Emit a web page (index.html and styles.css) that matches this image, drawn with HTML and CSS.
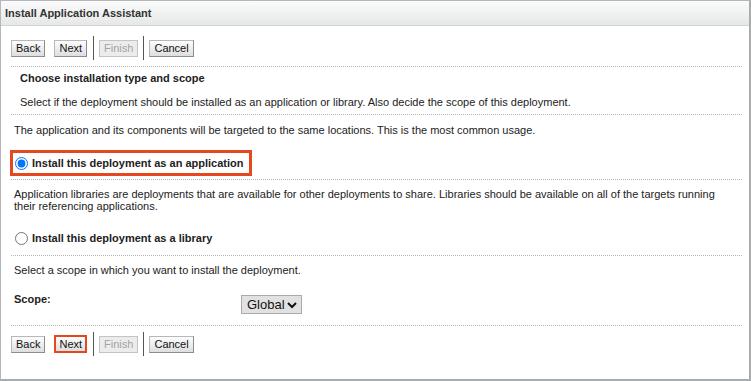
FILE: index.html
```html
<!DOCTYPE html>
<html>
<head>
  <title>Install Application Assistant</title>
  <link rel="stylesheet" href="styles.css">
</head>
<body>
  <div class="panel">
    <div class="panel-title">Install Application Assistant</div>
    <div class="panel-body">

      <div class="toolbar">
        <button class="button">Back</button>
        <button class="button next">Next</button>
        <span class="separator"></span>
        <button class="button" disabled>Finish</button>
        <span class="separator"></span>
        <button class="button cancel">Cancel</button>
      </div>

      <div class="rule"></div>

      <div class="step-head">
        <h2>Choose installation type and scope</h2>
        <p>Select if the deployment should be installed as an application or library. Also decide the scope of this deployment.</p>
      </div>

      <div class="rule"></div>

      <p class="info first-info">The application and its components will be targeted to the same locations. This is the most common usage.</p>

      <label class="choice highlight">
        <input type="radio" name="type" checked>
        <span>Install this deployment as an application</span>
      </label>

      <div class="rule rule-tight"></div>

      <p class="info multi">Application libraries are deployments that are available for other deployments to share. Libraries should be available on all of the targets running their referencing applications.</p>

      <label class="choice library">
        <input type="radio" name="type">
        <span>Install this deployment as a library</span>
      </label>

      <div class="rule rule-loose"></div>

      <p class="info scope-info">Select a scope in which you want to install the deployment.</p>

      <div class="scope-row">
        <span class="scope-label">Scope:</span>
        <select class="scope-select">
          <option>Global</option>
        </select>
      </div>

      <div class="rule"></div>

      <div class="toolbar bottom">
        <button class="button">Back</button>
        <button class="button next marked">Next</button>
        <span class="separator"></span>
        <button class="button" disabled>Finish</button>
        <span class="separator"></span>
        <button class="button cancel">Cancel</button>
      </div>

    </div>
  </div>
</body>
</html>
```

FILE: styles.css
```css
body {
  margin: 0;
  padding: 0;
  background-color: #fff;
  color: #222;
  font-family: "Liberation Sans", Arial, sans-serif;
  font-size: 11px;
}

/* Outer panel */
.panel {
  box-sizing: border-box;
  width: 751px;
  height: 381px;
  border: 1px solid #b4b8bb;
  border-right: 2px solid #a8acaf;
  border-bottom: 2px solid #a8acaf;
}

.panel-title {
  height: 24px;
  line-height: 24px;
  padding-left: 4px;
  font-weight: bold;
  color: #333;
  background: linear-gradient(#fbfbfb, #e6e8e8);
  border-bottom: 1px solid #d2d4d4;
}

.panel-body {
  padding: 0 8px 0 9px;
}

/* Button rows */
.toolbar {
  display: flex;
  align-items: center;
  height: 24px;
  margin: 10px 0 6px;
  padding-left: 1px;
}

.toolbar.bottom {
  margin-top: 6px;
}

.button {
  height: 17px;
  padding: 0 4px;
  margin-right: 9px;
  font-family: "Liberation Sans", Arial, sans-serif;
  font-size: 11px;
  line-height: 15px;
  color: #111;
  border: 1px solid #8c8c8c;
  border-top-color: #b8b8b8;
  border-left-color: #b8b8b8;
  border-radius: 0;
  background: linear-gradient(#fdfdfd, #dedede);
  cursor: pointer;
}

.button.next {
  margin-right: 6px;
}

.button.cancel {
  padding: 0 4px;
}

.button:disabled {
  color: #a3a3a3;
  border-color: #c4c4c4;
  background: #ececec;
  margin-right: 5px;
  padding: 0 4px;
  cursor: default;
}

.button.marked {
  height: 18px;
  padding: 0 3px;
  line-height: 14px;
  border: 2px solid #e5481f;
  outline: none;
}

.separator {
  width: 1px;
  height: 24px;
  background-color: #555;
  margin-right: 5px;
}

/* Dotted separators */
.rule {
  height: 0;
  border-top: 1px dotted #b6b6b6;
  margin-left: 1px;
  width: 731px;
}

.rule-tight {
  margin-top: 3px;
}

.rule-loose {
  margin-top: 10px;
}

/* Step heading */
.step-head {
  padding: 4px 0 5px 10px;
}

h2 {
  margin: 0;
  font-size: 11px;
  line-height: 14px;
  font-weight: bold;
  color: #222;
}

.step-head p {
  margin: 10px 0 0;
  line-height: 14px;
}

p.info {
  margin: 8px 0 0 4px;
  line-height: 14px;
}

p.multi {
  max-width: 708px;
  line-height: 12px;
  margin-top: 8px;
}

p.scope-info {
  margin-top: 7px;
}

/* Radio choices */
.choice {
  display: flex;
  align-items: center;
  font-weight: bold;
  color: #222;
  line-height: 14px;
}

.choice input {
  width: 13px;
  height: 13px;
  margin: 0 4px 0 2px;
}

.highlight {
  box-sizing: border-box;
  width: 242px;
  height: 26px;
  margin: 13px 0 0 0;
  border: 3px solid #e5481f;
}

.highlight input {
  margin-left: 2px;
}

.library {
  height: 14px;
  margin-top: 19px;
  padding-left: 3px;
}

/* Scope selector */
.scope-row {
  display: grid;
  grid-template-columns: 227px 60px;
  align-items: start;
  height: 22px;
  margin: 15px 0 11px 4px;
}

.scope-label {
  font-weight: bold;
  line-height: 14px;
}

.scope-select {
  appearance: none;
  -webkit-appearance: none;
  width: 61px;
  height: 19px;
  margin-top: 3px;
  padding: 0 0 0 5px;
  font-family: "Liberation Sans", Arial, sans-serif;
  font-size: 13px;
  line-height: 17px;
  color: #111;
  border: 1px solid #aaa;
  border-radius: 0;
  background: #e1e1e1 url("data:image/svg+xml;utf8,<svg xmlns='http://www.w3.org/2000/svg' width='10' height='8' viewBox='0 0 10 8'><path d='M1 2 L5 6 L9 2' fill='none' stroke='%23111' stroke-width='2'/></svg>") no-repeat right 4px center;
}
```
